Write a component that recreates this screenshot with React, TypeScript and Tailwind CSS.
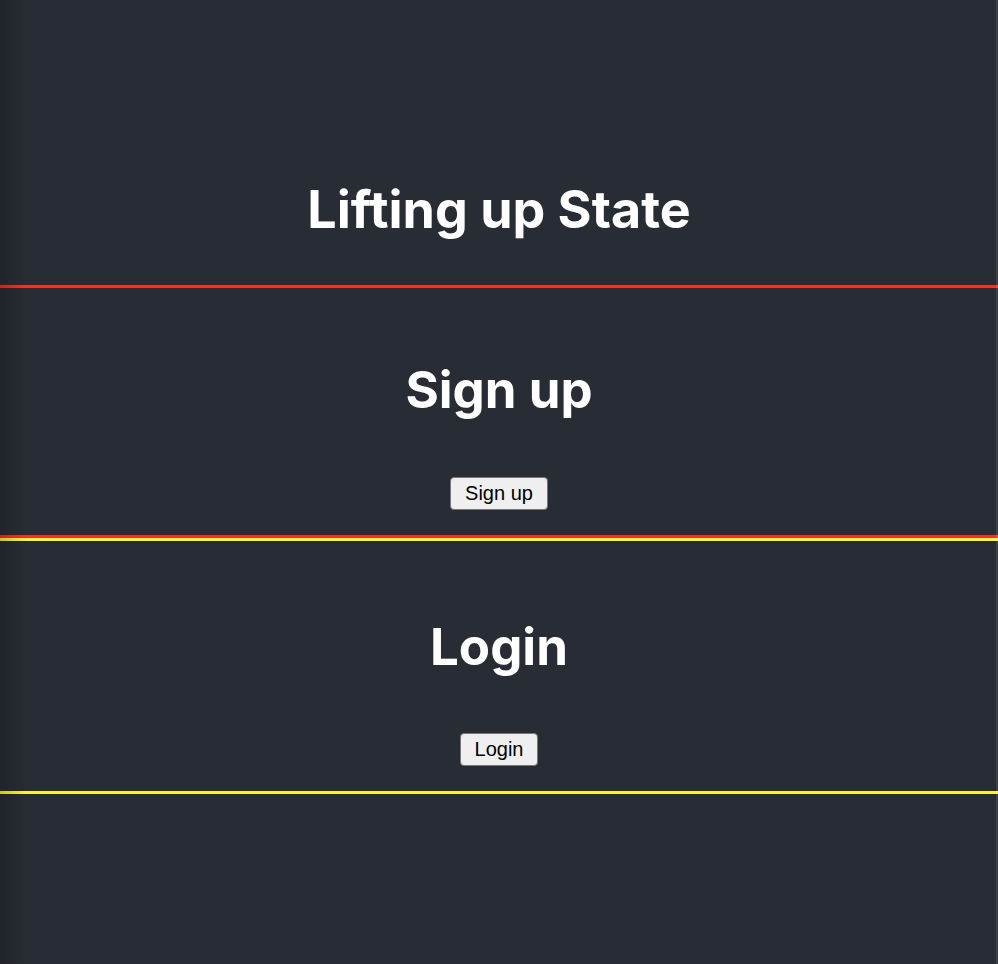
const Signup = () => {
  return (
    <div className="border-y-[3px] border-[#f03424] h-[253px] flex flex-col items-center">
      <h1 className="mt-[73px] text-[51px] leading-[58px] font-bold text-white">
        Sign up
      </h1>
      <button className="mt-[58px] px-[14px] py-[4px] text-[20px] leading-[23px] text-black bg-[#efefef] border border-[#767676] rounded-[4px] font-['Liberation_Sans',Arial,sans-serif]">
        Sign up
      </button>
    </div>
  );
};

const Login = () => {
  return (
    <div className="border-y-[3px] border-[#f8f43c] h-[256px] flex flex-col items-center">
      <h1 className="mt-[77px] text-[51px] leading-[58px] font-bold text-white">
        Login
      </h1>
      <button className="mt-[57px] px-[14px] py-[4px] text-[20px] leading-[23px] text-black bg-[#efefef] border border-[#767676] rounded-[4px] font-['Liberation_Sans',Arial,sans-serif]">
        Login
      </button>
    </div>
  );
};

export default function App() {
  return (
    <div className="relative min-h-screen bg-[#282c34] font-['Inter',sans-serif]">
      <header className="h-[285px] flex flex-col items-center">
        <h1 className="mt-[181px] text-[52px] leading-[58px] font-bold text-white">
          Lifting up State
        </h1>
      </header>
      <Signup />
      <Login />

      {/* left edge shading + right strip from the original window */}
      <div className="pointer-events-none absolute inset-y-0 left-0 w-[26px] bg-gradient-to-r from-black/20 to-transparent" />
      <div className="pointer-events-none absolute inset-y-0 right-0 w-[2px] bg-white/10" />
    </div>
  );
}
